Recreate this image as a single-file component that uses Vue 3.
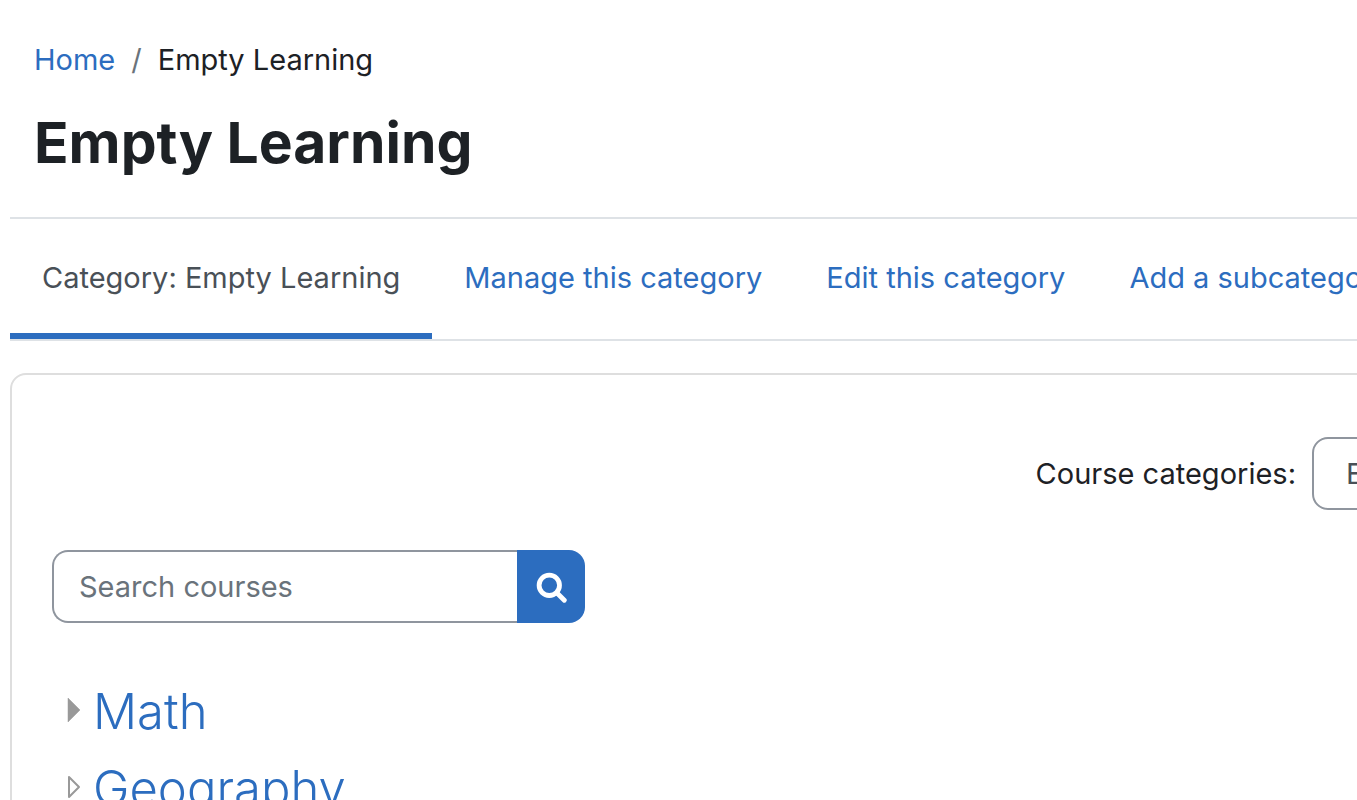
<script setup>
import { ref } from 'vue'
const query = ref('')
const tabs = ['Category: Empty Learning', 'Manage this category', 'Edit this category', 'Add a subcategory', 'More']
const categories = [
  { name: 'Math', filled: true },
  { name: 'Geography', filled: false }
]
</script>

<template>
  <div class="page">
    <header>
      <nav class="crumbs" aria-label="Breadcrumb">
        <a href="#">Home</a><span class="slash">/</span><span>Empty Learning</span>
      </nav>
      <h1>Empty Learning</h1>
    </header>
    <nav class="tabs" aria-label="Category navigation">
      <a v-for="(tab, i) in tabs" :key="tab" href="#" :class="{ active: i === 0 }">{{ tab }}</a>
    </nav>
    <main>
      <div class="picker">
        <label for="category">Course categories:</label>
        <select id="category"><option>Empty Learning</option></select>
      </div>
      <form class="search" @submit.prevent>
        <input v-model="query" type="text" placeholder="Search courses" aria-label="Search courses">
        <button type="submit" aria-label="Search">
          <svg viewBox="0 0 32 32" width="32" height="32" fill="none" stroke="currentColor">
            <circle cx="14.3" cy="14.3" r="10.2" stroke-width="4.8" />
            <path d="M22 22L29.3 29.3" stroke-width="4.8" stroke-linecap="round" />
          </svg>
        </button>
      </form>
      <ul class="categories">
        <li v-for="category in categories" :key="category.name">
          <svg viewBox="0 0 14 26" width="14" height="26">
            <path v-if="category.filled" d="M1 1V25L13 13Z" fill="#999" stroke="#999" stroke-width=".5" stroke-linejoin="round" />
            <path v-else d="M2 3V23L12 13Z" fill="none" stroke="#999" stroke-width="2" stroke-linejoin="round" />
          </svg>
          <a href="#">{{ category.name }}</a>
        </li>
      </ul>
    </main>
  </div>
</template>

<style>
html, body { overflow: hidden; }
body { margin: 0; background: #fff; }
</style>

<style scoped>
* { box-sizing: border-box; }
.page { height: 100vh; overflow: hidden; padding: 36px 0 0 10px; color: #1d2125; font: 29px/48px Inter, sans-serif; }
a { color: #2c6dbf; text-decoration: none; }
header { padding: 0 24px; }
.crumbs { display: flex; }
.slash { padding: 0 16px; color: #6a737b; }
h1 { margin: 20px 0 36px; font-size: 57px; line-height: 77px; font-weight: 700; }
.tabs { display: flex; height: 124px; overflow: hidden; white-space: nowrap; border-top: 2px solid #dee2e6; border-bottom: 2px solid #dee2e6; }
.tabs a { flex: none; padding: 35px 32px 0; border-bottom: 6px solid transparent; }
.tabs .active { color: #495057; border-color: #2c6dbf; }
/* The card runs on past the right side of the window. */
main { margin-top: 32px; margin-right: -380px; padding: 62px 40px; border: 2px solid #dee2e6; border-color: #dedede; border-radius: 16px; }
.picker { display: flex; justify-content: flex-end; align-items: center; gap: 16px; }
select { appearance: none; width: 383px; height: 73px; padding: 0 32px; border: 2px solid #8f959e; border-radius: 16px; color: #495057; background: #fff; font: inherit; }
.search { display: flex; width: 533px; height: 73px; margin-top: 40px; }
input { flex: 1; min-width: 0; padding: 0 25px; border: 2px solid #8f959e; border-right: 0; border-radius: 16px 0 0 16px; color: #495057; background: #fff; font: inherit; outline: 0; }
input::placeholder { color: #6a737b; opacity: 1; }
button { display: flex; align-items: center; justify-content: center; width: 68px; padding: 0; border: 0; border-radius: 0 16px 16px 0; color: #fff; background: #2c6dbf; }
.categories { margin: 50px 0 0; padding: 0 0 0 15px; list-style: none; }
li { display: flex; align-items: center; gap: 12px; height: 77px; font-size: 49px; font-weight: 300; line-height: 77px; }
li svg { margin-bottom: 4px; }
</style>
